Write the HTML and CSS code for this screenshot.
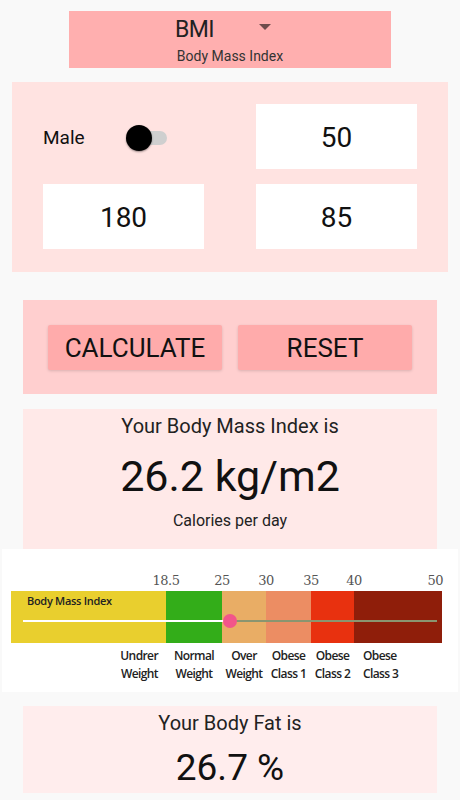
FILE: index.html
```html
<!DOCTYPE html>
<html>
<head>
    <title>BMI Calculator</title>
    <link rel="stylesheet" href="styles.css">
</head>
<body>
<section id="content">

    <!-- calculator type picker -->
    <section class="picker">
        <div class="picker-row">
            <span class="picker-value">BMI</span>
            <span class="picker-arrow"></span>
        </div>
        <div class="picker-sub">Body Mass Index</div>
    </section>

    <!-- gender, age, height, weight -->
    <section class="inputs">
        <div class="gender">
            <span class="gender-label">Male</span>
            <span class="toggle"><span class="toggle-thumb"></span></span>
        </div>
        <div class="field">50</div>
        <div class="field">180</div>
        <div class="field">85</div>
    </section>

    <section class="buttons">
        <button class="btn">CALCULATE</button>
        <button class="btn">RESET</button>
    </section>

    <section class="result">
        <div class="result-title">Your Body Mass Index is</div>
        <div class="result-value">26.2 kg/m2</div>
        <div class="result-sub">Calories per day</div>
    </section>

    <!-- bmi scale chart -->
    <section class="chart">
        <div class="scale-nums">
            <div class="seg s1"><span>18.5</span></div>
            <div class="seg s2"><span>25</span></div>
            <div class="seg s3"><span>30</span></div>
            <div class="seg s4"><span>35</span></div>
            <div class="seg s5"><span>40</span></div>
            <div class="seg s6"><span>50</span></div>
        </div>
        <div class="bar">
            <div class="seg s1 c1"></div>
            <div class="seg s2 c2"></div>
            <div class="seg s3 c3"></div>
            <div class="seg s4 c4"></div>
            <div class="seg s5 c5"></div>
            <div class="seg s6 c6"></div>
            <span class="bar-title">Body Mass Index</span>
            <span class="track-done"></span>
            <span class="track-rest"></span>
            <span class="track-thumb"></span>
        </div>
        <div class="scale-labels">
            <div class="seg s1 first">Undrer<br>Weight</div>
            <div class="seg s2">Normal<br>Weight</div>
            <div class="seg s3">Over<br>Weight</div>
            <div class="seg s4">Obese<br>Class 1</div>
            <div class="seg s5">Obese<br>Class 2</div>
            <div class="seg s6 last">Obese<br>Class 3</div>
        </div>
    </section>

    <section class="result fat">
        <div class="result-title">Your Body Fat is</div>
        <div class="result-value small">26.7 %</div>
    </section>

</section>
</body>
</html>
```

FILE: styles.css
```css
body {
    margin: 0;
    background: #f9f9f9;
    font-family: Roboto, "Noto Sans", sans-serif;
    color: #111;
}

#content {
    width: 460px;
    height: 800px;
    overflow: hidden;
    display: flex;
    flex-direction: column;
    align-items: center;
}

/* top picker */
.picker {
    margin-top: 11px;
    width: 322px;
    height: 57px;
    background: #ffafaf;
    display: flex;
    flex-direction: column;
    align-items: center;
}

.picker-row {
    display: flex;
    align-items: center;
    gap: 45px;
    height: 36px;
    padding-right: 14px;
}

.picker-value {
    font-size: 23px;
    color: #222;
    letter-spacing: -0.5px;
}

.picker-arrow {
    width: 0;
    height: 0;
    border-left: 6px solid transparent;
    border-right: 6px solid transparent;
    border-top: 6px solid #6e4c4c;
    margin-top: -4px;
}

.picker-sub {
    font-size: 14px;
    color: #333;
    margin-top: 1px;
}

/* inputs panel */
.inputs {
    margin-top: 14px;
    width: 436px;
    box-sizing: border-box;
    padding: 22px 31px 23px 31px;
    background: #ffe3e1;
    display: grid;
    grid-template-columns: 161px 161px;
    column-gap: 52px;
    row-gap: 15px;
}

.gender {
    display: flex;
    align-items: center;
    height: 65px;
    padding-top: 2px;
    box-sizing: border-box;
}

.gender-label {
    font-size: 19px;
    color: #111;
    width: 83px;
}

.toggle {
    position: relative;
    width: 35px;
    height: 14px;
    border-radius: 7px;
    background: #cfcfcf;
    margin-left: 6px;
}

.toggle-thumb {
    position: absolute;
    left: -6px;
    top: -6px;
    width: 26px;
    height: 26px;
    border-radius: 50%;
    background: #000;
    box-shadow: 0 1px 2px rgba(0,0,0,0.4);
}

.field {
    height: 65px;
    background: #fff;
    display: flex;
    align-items: center;
    justify-content: center;
    font-size: 28px;
    color: #111;
    padding-top: 2px;
    box-sizing: border-box;
}

/* buttons */
.buttons {
    margin-top: 28px;
    width: 414px;
    height: 94px;
    box-sizing: border-box;
    padding: 25px 25px 24px 25px;
    background: #ffcfcf;
    display: flex;
    gap: 16px;
}

.btn {
    flex: 1;
    border: none;
    border-radius: 2px;
    background: #ffabab;
    font-family: inherit;
    font-size: 26px;
    color: #111;
    box-shadow: 0 1px 3px rgba(0,0,0,0.15);
    padding: 0;
}

/* results */
.result {
    margin-top: 15px;
    width: 414px;
    height: 140px;
    background: #ffe9e8;
    display: flex;
    flex-direction: column;
    align-items: center;
}

.result-title {
    margin-top: 5px;
    font-size: 20px;
    line-height: 24px;
    color: #222;
}

.result-value {
    font-size: 43px;
    line-height: 56px;
    margin-top: 10px;
    color: #111;
}

.result-sub {
    font-size: 16px;
    line-height: 22px;
    margin-top: 6px;
    color: #222;
}

.fat {
    margin-top: 14px;
    height: 87px;
    background: #ffeded;
}

.fat .result-title {
    margin-top: 5px;
}

.result-value.small {
    font-size: 37px;
    line-height: 48px;
    margin-top: 9px;
}

/* chart */
.chart {
    width: 456px;
    height: 143px;
    background: #fff;
    box-sizing: border-box;
    padding-left: 9px;
    padding-top: 19px;
    font-family: "Open Sans", sans-serif;
}

.scale-nums,
.bar,
.scale-labels {
    display: flex;
    width: 431px;
}

.s1 { width: 155px; }
.s2 { width: 56px; }
.s3 { width: 44px; }
.s4 { width: 45px; }
.s5 { width: 43px; }
.s6 { width: 88px; }

.scale-nums {
    height: 23px;
}

.scale-nums .seg {
    text-align: right;
}

.scale-nums span {
    display: inline-block;
    transform: translateX(50%);
    font-family: "DejaVu Serif", serif;
    font-size: 13px;
    color: #555;
    letter-spacing: -0.5px;
}

.scale-nums .s6 span {
    transform: translateX(1px);
}

.bar {
    position: relative;
    height: 52px;
}

.c1 { background: #e9cf2e; }
.c2 { background: #33ad19; }
.c3 { background: #e9ad65; }
.c4 { background: #ec8d63; }
.c5 { background: #e8310f; }
.c6 { background: #8f1e0a; }

.bar-title {
    position: absolute;
    left: 16px;
    top: 2px;
    font-size: 11px;
    font-weight: 600;
    color: #222;
    letter-spacing: -0.3px;
}

.track-done {
    position: absolute;
    left: 12px;
    top: 29px;
    width: 207px;
    height: 2px;
    background: #fff;
}

.track-rest {
    position: absolute;
    left: 219px;
    top: 29px;
    width: 207px;
    height: 2px;
    background: #8a9570;
}

.track-thumb {
    position: absolute;
    left: 212px;
    top: 23px;
    width: 14px;
    height: 14px;
    border-radius: 50%;
    background: #f2558a;
}

.scale-labels {
    margin-top: 4px;
    font-size: 12px;
    line-height: 18px;
    font-weight: 600;
    color: #222;
    letter-spacing: -0.6px;
}

.scale-labels .seg {
    text-align: center;
}

.scale-labels .first {
    text-align: right;
    box-sizing: border-box;
    padding-right: 8px;
}

.scale-labels .last {
    text-align: left;
    box-sizing: border-box;
    padding-left: 9px;
}
```
